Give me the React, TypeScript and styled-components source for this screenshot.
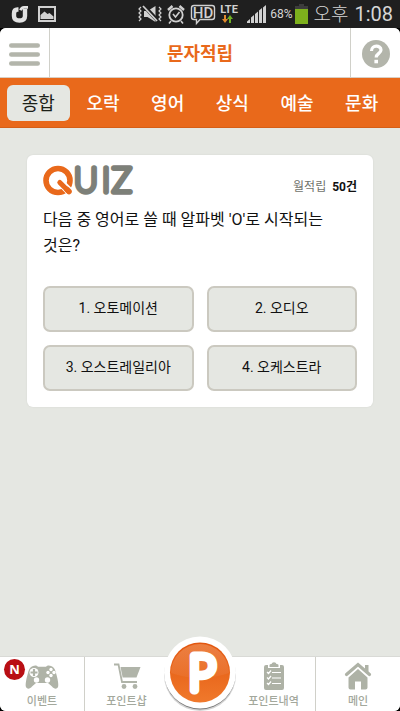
import React, { useState } from 'react';
import styled, { createGlobalStyle } from 'styled-components';

const colors = {
  orange: '#e9691b',
  page: '#e5e7e2',
  line: '#d0d0c9',
  icon: '#b3b5ab',
  label: '#a3a89c',
};

const GlobalStyle = createGlobalStyle`
  * { box-sizing: border-box; }
  body {
    margin: 0;
    background: #000;
    font-family: Roboto, "Noto Sans CJK KR", sans-serif;
    color: #111;
  }
  button { font: inherit; color: inherit; border: 0; padding: 0; background: none; cursor: pointer; }
  svg { display: block; flex: none; }
`;

const Screen = styled.div`
  min-height: 100vh;
  display: flex;
  flex-direction: column;
`;

const StatusBar = styled.div`
  height: 28px;
  flex: none;
  display: flex;
  align-items: center;
  justify-content: space-between;
  padding: 0 7px 0 10px;
  background: #1f1f1f;
  color: #d6d6d6;
`;

const StatusGroup = styled.div<{ $gap: number }>`
  display: flex;
  align-items: center;
  gap: ${(p) => p.$gap}px;
`;

const Percent = styled.span`
  font-size: 12px;
  line-height: 28px;
`;

const Clock = styled.span`
  display: flex;
  align-items: baseline;
  gap: 6px;
  font-size: 20px;
  line-height: 28px;
`;

const ClockPeriod = styled.span`
  font-size: 19px;
  font-weight: 300;
`;

const Page = styled.div`
  flex: 1;
  display: flex;
  flex-direction: column;
  background: ${colors.page};
  border-radius: 6px;
  overflow: hidden;
`;

const Header = styled.header`
  height: 50px;
  flex: none;
  display: grid;
  grid-template-columns: 50px 1fr 50px;
  background: #fff;
  border-bottom: 1px solid #d9cfc4;
`;

const HeaderButton = styled.button<{ $side: 'left' | 'right' }>`
  display: flex;
  align-items: center;
  justify-content: center;
  border-${(p) => (p.$side === 'left' ? 'right' : 'left')}: 1px solid ${colors.line};
`;

const Title = styled.h1`
  margin: 0;
  text-align: center;
  font-size: 18px;
  line-height: 52px;
  font-weight: 700;
  color: ${colors.orange};
`;

const Tabs = styled.nav`
  height: 50px;
  flex: none;
  display: grid;
  grid-template-columns: repeat(6, 1fr);
  gap: 2px;
  padding: 7px 7px 6px;
  background: ${colors.orange};
  border-bottom: 1px solid #d65f17;
`;

const Tab = styled.button<{ $active: boolean }>`
  border-radius: 6px;
  padding-top: 2px;
  font-size: 18px;
  line-height: 34px;
  font-weight: ${(p) => (p.$active ? 400 : 500)};
  color: ${(p) => (p.$active ? '#1c2118' : '#fff')};
  background: ${(p) => (p.$active ? colors.page : 'transparent')};
`;

const Main = styled.main`
  flex: 1;
  padding: 27px;
`;

const Card = styled.section`
  background: #fff;
  border-radius: 6px;
  padding: 2px 16px 16px;
  box-shadow: 0 0 2px rgba(0, 0, 0, 0.08);
`;

const CardHead = styled.div`
  display: flex;
  justify-content: space-between;
  align-items: flex-end;
`;

const Counter = styled.p`
  margin: 0 0 11px;
  display: flex;
  gap: 6px;
  font-size: 12px;
  line-height: 18px;
  color: #6f726b;
`;

const Count = styled.strong`
  font-weight: 700;
  color: #111;
`;

const Question = styled.p`
  margin: 0 0 27px;
  font-size: 16px;
  line-height: 26px;
  color: #111;
  word-break: keep-all;
`;

const Answers = styled.div`
  display: grid;
  grid-template-columns: 1fr 1fr;
  gap: 13px;
`;

const Answer = styled.button`
  height: 46px;
  border: 2px solid #cbc9c0;
  border-radius: 7px;
  background: ${colors.page};
  font-size: 14px;
  line-height: 20px;
  padding-bottom: 2px;
`;

const BottomNav = styled.nav`
  height: 55px;
  flex: none;
  display: grid;
  grid-template-columns: 85px 1fr 64px 1fr 85px;
  background: #fff;
  border-top: 1px solid #d9dad6;
`;

const NavItem = styled.button<{ $divider?: 'left' | 'right' }>`
  position: relative;
  display: flex;
  flex-direction: column;
  align-items: center;
  gap: 4px;
  padding-top: 5px;
  font-size: 11px;
  line-height: 16px;
  font-weight: 500;
  color: ${colors.label};
  ${(p) => p.$divider && `border-${p.$divider}: 1px solid ${colors.line};`}
`;

const NewBadge = styled.span`
  position: absolute;
  left: 4px;
  top: 2px;
  width: 21px;
  height: 21px;
  border-radius: 50%;
  background: #b90f14;
  color: #fff;
  font-family: "Open Sans", sans-serif;
  font-size: 13px;
  line-height: 21px;
  font-weight: 700;
  text-align: center;
`;

const PointButton = styled.button`
  position: relative;
  display: flex;
  justify-content: center;
`;

const PointMark = styled.span`
  position: absolute;
  top: -21px;
`;

const SignalIcons = () => (
  <svg width="130" height="28" viewBox="0 0 130 28" fill="none" stroke="#d0d0d0">
    <path d="M6 11h3.500l8-5v16l-8-5H6z" fill="#d0d0d0" stroke="none" />
    <path d="M6 6l14 15" stroke="#1f1f1f" strokeWidth="4" />
    <path d="M5 6l14 15" strokeWidth="1.800" />
    <path d="M3 7l-2 2 2 2-2 2 2 2-2 2 2 2-2 2M21 7l2 2-2 2 2 2-2 2 2 2-2 2 2 2" strokeWidth="1.200" />
    <circle cx="38" cy="15" r="6.700" strokeWidth="1.800" />
    <path d="M35 14l2.500 3 4-5M33 21l-2 2.500M43 21l2 2.500" strokeWidth="1.600" />
    <path d="M30 10l4.500-4M46 10l-4.500-4" strokeWidth="2.400" />
    <path d="M56 5.500h18q2.500 0 2.500 2.500v9q0 2.500-2.500 2.500H62l-3.500 4V19.500H56q-2.500 0-2.500-2.500V8q0-2.500 2.500-2.500z" strokeWidth="1.400" />
    <text x="65" y="18" textAnchor="middle" fontFamily="Roboto, sans-serif" fontSize="15" fontWeight="500" fill="#d0d0d0" stroke="none">HD</text>
    <text x="91" y="13" textAnchor="middle" fontFamily="Roboto, sans-serif" fontSize="11" fontWeight="700" fill="#d0d0d0" stroke="none">LTE</text>
    <path d="M86 15h2v4h2l-3 4-3-4h2z" fill="#e08a2c" stroke="none" />
    <path d="M93 23h-2v-4h-2l3-4 3 4h-2z" fill="#6fb022" stroke="none" />
    <path d="M109 21.500l3-2.500v4h-3zM113 17.500l3-2.500v8h-3zM117 14l3-2.500v11.500h-3zM121 10.500l3-2.500v15h-3zM125 7.500l3-2.500v18h-3z" fill="#d0d0d0" stroke="none" />
  </svg>
);

const CarrierIcons = () => (
  <svg width="46" height="28" viewBox="0 0 46 28">
    <path d="M8.500 9.500h-1q-3.500 0-3.500 4v2.500q0 4.500 5.500 4.500t5.500-4.500V9" fill="none" stroke="#e2e2e2" strokeWidth="4.400" />
    <path d="M18 7.300h-4q-2.500 0-3.500 3" fill="none" stroke="#e2e2e2" strokeWidth="2.800" />
    <rect x="29" y="7" width="16" height="14" fill="none" stroke="#d0d0d0" strokeWidth="2" />
    <path d="M30.500 19v-4l4-3.500 3 2.500 2-1 4 3.500V19z" fill="#d0d0d0" />
  </svg>
);

const BatteryIcon = () => (
  <svg width="13" height="20" viewBox="0 0 13 20">
    <path d="M4 0h5v2h4v4H0V2h4z" fill="#3c3c3c" />
    <rect y="5" width="13" height="15" fill="#7db01c" />
  </svg>
);

const MenuIcon = () => (
  <svg width="31" height="23" viewBox="0 0 31 23" stroke={colors.icon} strokeWidth="4.600" strokeLinecap="round">
    <path d="M2.300 2.500h26.400M2.300 11.500h26.400M2.300 20.500h26.400" />
  </svg>
);

const HelpIcon = () => (
  <svg width="28" height="28" viewBox="0 0 28 28">
    <circle cx="14" cy="14" r="14" fill={colors.icon} />
    <path d="M9.500 11c0-6.500 9.500-6 9.500-1 0 3.500-4.800 3.300-4.800 7.500" fill="none" stroke="#fff" strokeWidth="3.200" />
    <rect x="12.400" y="19.800" width="3.600" height="3.500" fill="#fff" />
  </svg>
);

const QuizLogo = () => (
  <svg width="92" height="50" viewBox="0 -8 92 50" role="img" aria-label="QUIZ">
    <circle cx="15" cy="15.500" r="12" fill="none" stroke={colors.orange} strokeWidth="5.600" />
    <path d="M18 18l8 8" stroke="#fff" strokeWidth="8" />
    <path d="M16.800 17.500l8.500 8.500" stroke={colors.orange} strokeWidth="5" strokeLinecap="round" />
    <path d="M24 24.500l2 2" stroke={colors.orange} strokeWidth="5.600" strokeLinecap="round" />
    <text
      y="27"
      fontFamily="Lato, sans-serif"
      fontWeight="100"
      fontSize="33"
      fill="#7d8079"
      stroke="#7d8079"
      strokeWidth="5.400"
      strokeLinejoin="round"
    >
      <tspan x="31">U</tspan>
      <tspan x="59">I</tspan>
      <tspan x="69">Z</tspan>
    </text>
  </svg>
);

const PointLogo = () => (
  <svg width="76" height="76" viewBox="0 0 76 76" role="img" aria-label="P">
    <defs>
      <linearGradient id="pointFill" x1="0" y1="0" x2="0" y2="1">
        <stop offset="0" stopColor="#e2560f" />
        <stop offset="0.500" stopColor="#e9671c" />
        <stop offset="1" stopColor="#f0792c" />
      </linearGradient>
      <linearGradient id="pointGloss" x1="0" y1="0" x2="0" y2="1">
        <stop offset="0" stopColor="#f3a06b" />
        <stop offset="1" stopColor="#ea7330" />
      </linearGradient>
    </defs>
    <circle cx="38" cy="39" r="36" fill="#555" opacity="0.250" />
    <circle cx="38" cy="38" r="35.500" fill="#777" />
    <circle cx="38" cy="36.500" r="36" fill="#fff" />
    <circle cx="38" cy="36.500" r="30" fill="url(#pointFill)" />
    <path d="M9 37a29 29 0 0 1 58 0q-29 10-58 0z" fill="url(#pointGloss)" opacity="0.550" />
    <text x="40" y="54" textAnchor="middle" fontFamily="Lato, sans-serif" fontWeight="100" fontSize="47" fill="#fff" stroke="#fff" strokeWidth="9" strokeLinejoin="round">P</text>
  </svg>
);

const GamepadIcon = () => (
  <svg width="34" height="28" viewBox="0 0 34 28">
    <path d="M8 4c2-1 4-.5 5 .8h8c1-1.300 3-1.800 5-.8 3 1.200 4 3 5 7 1.500 5 3 12 2 14-1.300 2.500-4 2-6-.5L23 21H11l-4 3.500c-2 2.500-4.700 3-6 .5-1-2 .5-9 2-14 1-4 2-5.800 5-7z" fill="#afb3a7" />
    <circle cx="9" cy="10.500" r="4.500" fill="#fff" />
    <path d="M9 7v7M5.500 10.500h7" stroke="#afb3a7" strokeWidth="2.200" />
    <g fill="#fff">
      <circle cx="26" cy="7.500" r="1.700" /><circle cx="26" cy="13.500" r="1.700" />
      <circle cx="23" cy="10.500" r="1.700" /><circle cx="29" cy="10.500" r="1.700" />
      <circle cx="11.500" cy="18" r="2.700" /><circle cx="22.500" cy="18" r="2.700" />
    </g>
  </svg>
);

const CartIcon = () => (
  <svg width="28" height="28" viewBox="0 0 28 28">
    <path d="M1 2.500h4.500L9 20h15" fill="none" stroke="#b0b4a9" strokeWidth="1.800" />
    <path d="M7.500 5H27.500l-4 10.500H9.600z" fill="#b0b4a9" />
    <circle cx="11" cy="24.500" r="2.400" fill="#b0b4a9" />
    <circle cx="22" cy="24.500" r="2.400" fill="#b0b4a9" />
  </svg>
);

const ClipboardIcon = () => (
  <svg width="22" height="28" viewBox="0 0 22 28">
    <path d="M3 3h2v3h12V3h2q2 0 2 2v21q0 2-2 2H3q-2 0-2-2V5q0-2 2-2z" fill="#aeb2a6" />
    <path d="M6.500 5V3q0-1 2-1Q9 .3 11 .3T13.500 2q2 0 2 1v2z" fill="#aeb2a6" />
    <path d="M9 10.500h9M9 16h9M9 21.500h9M4 10l1.500 1.500L8 8.500M4 15.500L5.500 17 8 14M4 21l1.500 1.500L8 19.500" fill="none" stroke="#fff" strokeWidth="1.200" />
  </svg>
);

const HomeIcon = () => (
  <svg width="28" height="28" viewBox="0 0 28 28">
    <path d="M2.500 12.500L14 2.500l11.500 10" fill="none" stroke="#aeb2a6" strokeWidth="3.200" strokeLinecap="round" />
    <path d="M21 3h3.500v7L21 7z" fill="#aeb2a6" />
    <path d="M4.500 15.500L14 7l9.500 8.500V25.500q0 2-2 2H17v-8h-6v8H6.500q-2 0-2-2z" fill="#aeb2a6" />
  </svg>
);

const tabs = ['종합', '오락', '영어', '상식', '예술', '문화'];
const answers = ['1. 오토메이션', '2. 오디오', '3. 오스트레일리아', '4. 오케스트라'];

export default function App() {
  const [active, setActive] = useState(0);
  return (
    <>
      <GlobalStyle />
      <Screen>
        <StatusBar>
          <CarrierIcons />
          <StatusGroup $gap={5}>
            <StatusGroup $gap={3}>
              <StatusGroup $gap={2}>
                <SignalIcons />
                <Percent>68%</Percent>
              </StatusGroup>
              <BatteryIcon />
            </StatusGroup>
            <Clock>
              <ClockPeriod>오후</ClockPeriod>
              <span>1:08</span>
            </Clock>
          </StatusGroup>
        </StatusBar>
        <Page>
          <Header>
            <HeaderButton $side="left" aria-label="메뉴"><MenuIcon /></HeaderButton>
            <Title>문자적립</Title>
            <HeaderButton $side="right" aria-label="도움말"><HelpIcon /></HeaderButton>
          </Header>
          <Tabs>
            {tabs.map((name, i) => (
              <Tab key={name} $active={i === active} onClick={() => setActive(i)}>{name}</Tab>
            ))}
          </Tabs>
          <Main>
            <Card>
              <CardHead>
                <QuizLogo />
                <Counter>월적립 <Count>50건</Count></Counter>
              </CardHead>
              <Question>다음 중 영어로 쓸 때 알파벳 'O'로 시작되는 것은?</Question>
              <Answers>
                {answers.map((text) => <Answer key={text}>{text}</Answer>)}
              </Answers>
            </Card>
          </Main>
          <BottomNav>
            <NavItem $divider="right"><GamepadIcon />이벤트<NewBadge>N</NewBadge></NavItem>
            <NavItem><CartIcon />포인트샵</NavItem>
            <PointButton><PointMark><PointLogo /></PointMark></PointButton>
            <NavItem><ClipboardIcon />포인트내역</NavItem>
            <NavItem $divider="left"><HomeIcon />메인</NavItem>
          </BottomNav>
        </Page>
      </Screen>
    </>
  );
}
